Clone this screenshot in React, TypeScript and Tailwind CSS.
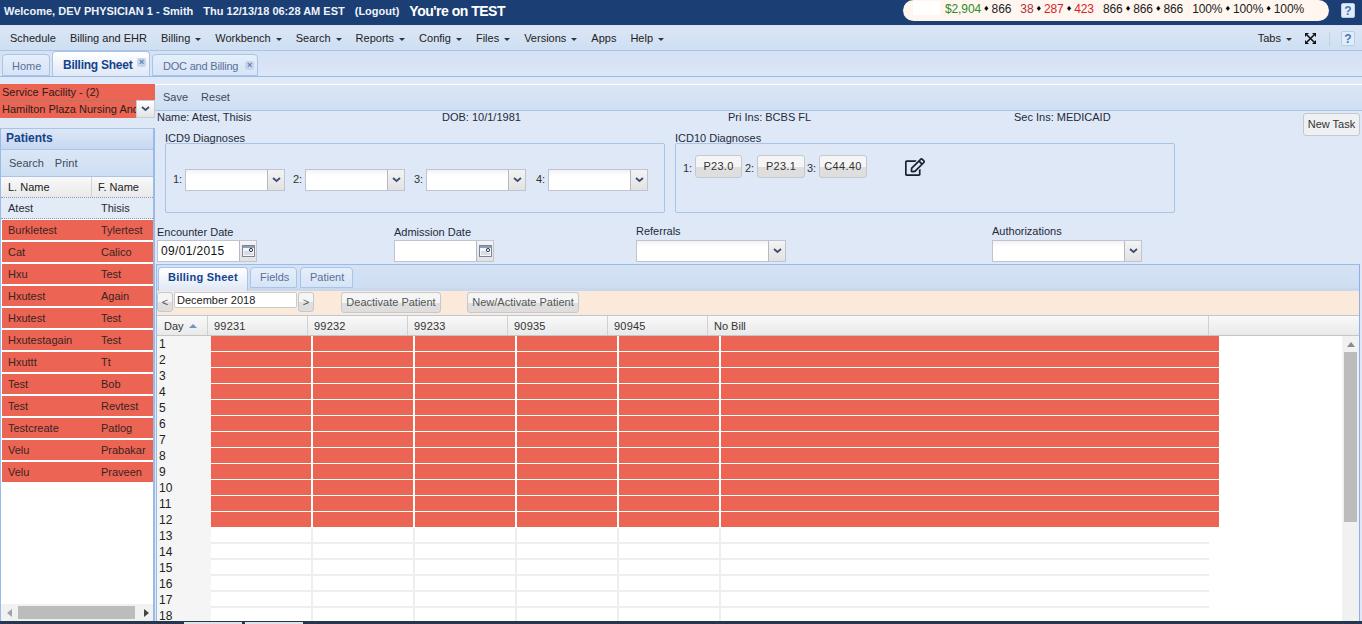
import React from 'react'
import { FaRegEdit } from 'react-icons/fa'

const menuItems = [
  { label: 'Schedule' },
  { label: 'Billing and EHR' },
  { label: 'Billing', caret: true },
  { label: 'Workbench', caret: true },
  { label: 'Search', caret: true },
  { label: 'Reports', caret: true },
  { label: 'Config', caret: true },
  { label: 'Files', caret: true },
  { label: 'Versions', caret: true },
  { label: 'Apps' },
  { label: 'Help', caret: true },
]

const patients = [
  ['Burkletest', 'Tylertest'],
  ['Cat', 'Calico'],
  ['Hxu', 'Test'],
  ['Hxutest', 'Again'],
  ['Hxutest', 'Test'],
  ['Hxutestagain', 'Test'],
  ['Hxuttt', 'Tt'],
  ['Test', 'Bob'],
  ['Test', 'Revtest'],
  ['Testcreate', 'Patlog'],
  ['Velu', 'Prabakar'],
  ['Velu', 'Praveen'],
]

const gridColumns = ['99231', '99232', '99233', '90935', '90945']
const days = Array.from({ length: 18 }, (_, i) => i + 1)

const Caret = () => (
  <span className="ml-[5px] inline-block h-0 w-0 border-x-[3px] border-t-[3px] border-x-transparent border-t-[#333] align-middle" />
)

const Chevron = () => (
  <svg width="9" height="6" viewBox="0 0 9 6">
    <path d="M1 1l3.5 3L8 1" fill="none" stroke="#3a4f75" strokeWidth="1.8" />
  </svg>
)

const Diamond = () => <span className="mx-[3px] text-[9px] text-black">♦</span>

const HelpIcon = () => (
  <span className="flex h-[15px] w-[14px] items-center justify-center rounded-[2px] border border-[#b8cde6] bg-[#e2edfa] text-[12px] font-bold leading-none text-[#3f78b8]">
    ?
  </span>
)

const CalendarIcon = () => (
  <svg width="13" height="12" viewBox="0 0 13 12">
    <rect x="0.5" y="0.5" width="12" height="11" fill="#f4f6fa" stroke="#7b8596" />
    <rect x="1" y="1" width="11" height="2" fill="#8aa0c0" />
    <circle cx="9" cy="5" r="1.6" fill="#fff" stroke="#333" />
    <path d="M2 7h6M2 9h9" stroke="#b9c3d2" />
  </svg>
)

const Trigger = ({ children }: { children: React.ReactNode }) => (
  <div className="flex w-[17px] shrink-0 items-center justify-center border-l border-[#b5b8c8] bg-gradient-to-b from-[#f4f4f4] to-[#e2e2e2]">
    {children}
  </div>
)

const Combo = ({ width, className = '' }: { width: string; className?: string }) => (
  <div className={`flex h-[22px] border border-[#c0c3d0] bg-gradient-to-b from-[#f2f2f2] to-white to-30% ${width} ${className}`}>
    <div className="flex-1" />
    <Trigger>
      <Chevron />
    </Trigger>
  </div>
)

const DateField = ({ value }: { value?: string }) => (
  <div className="flex h-[22px] w-[100px] border border-[#c0c3d0] bg-white">
    <div className="flex-1 pl-[3px] text-[12px] leading-[21px] tracking-[0.35px] text-[#111]">{value}</div>
    <Trigger>
      <CalendarIcon />
    </Trigger>
  </div>
)

const GrayButton = ({ children, className = '' }: { children: React.ReactNode; className?: string }) => (
  <button className={`rounded-[3px] border border-[#c4c8cf] bg-[linear-gradient(#f5f5f5_50%,#dedede_50%)] text-center text-[#555] ${className}`}>
    {children}
  </button>
)

const Tab = ({
  label,
  active,
  closable,
  className = '',
}: {
  label: string
  active?: boolean
  closable?: boolean
  className?: string
}) => (
  <div
    className={`relative rounded-t-[4px] border border-[#a9c4e6] ${
      active
        ? 'border-b-0 bg-gradient-to-b from-white to-[#dfe8f6] font-bold text-[#15428b]'
        : 'bg-gradient-to-b from-[#e6effa] to-[#d6e4f7] text-[#5a7099]'
    } ${className}`}
  >
    {label}
    {closable && (
      <span className="absolute right-[3px] top-[6px] flex h-[9px] w-[9px] items-center justify-center rounded-[2px] bg-[#c6d6ec] text-[9px] font-bold leading-none text-[#5c7db0]">
        ×
      </span>
    )}
  </div>
)

const App: React.FC = () => {
  return (
    <div className="relative flex h-[624px] w-[1362px] flex-col overflow-hidden bg-[#dfe8f6] font-['Liberation_Sans',Arial,sans-serif] text-[11px] text-[#1e2a3a]">
      {/* Top banner */}
      <div className="flex h-[25px] shrink-0 items-start bg-[#1b3f74] pl-[4px] text-white">
        <span className="mt-[3px] text-[11px] font-bold text-[#eef3fa]">Welcome, DEV PHYSICIAN 1 - Smith</span>
        <span className="ml-[10px] mt-[3px] text-[11px] font-bold text-[#eef3fa]">Thu 12/13/18 06:28 AM EST</span>
        <span className="ml-[10px] mt-[3px] text-[11px] font-bold text-[#eef3fa]">(Logout)</span>
        <span className="ml-[10px] mt-[1px] text-[14px] font-bold tracking-[-0.5px]">You're on TEST</span>
        <div className="ml-[398px] flex h-[21px] w-[426px] items-start rounded-full bg-[#fff6f0] pl-[10px] text-[12px] tracking-[-0.1px] text-[#222]">
          <div className="mt-[1px] mr-[5px] h-[14px] w-[27px] bg-white" />
          <div className="flex items-center">
            <span className="text-[#2e8b2e]">$2,904</span>
            <Diamond />
            <span>866</span>
            <span className="ml-[9px] text-[#b03040]">38</span>
            <Diamond />
            <span className="text-[#d8232a]">287</span>
            <Diamond />
            <span className="text-[#d8232a]">423</span>
            <span className="ml-[9px]">866</span>
            <Diamond />
            <span>866</span>
            <Diamond />
            <span>866</span>
            <span className="ml-[9px]">100%</span>
            <Diamond />
            <span>100%</span>
            <Diamond />
            <span>100%</span>
          </div>
        </div>
        <div className="ml-auto mr-[7px] mt-[3px]">
          <HelpIcon />
        </div>
      </div>

      {/* Main menu */}
      <div className="flex h-[26px] shrink-0 items-center border-y border-[#a9c4e6] border-t-[#d6e2f3] bg-gradient-to-b from-[#dbe6f5] to-[#cedff3] pl-[10px] pr-[7px] pt-[1px] text-[#222]">
        <div className="flex gap-[14px]">
          {menuItems.map((item) => (
            <span key={item.label} className="whitespace-nowrap">
              {item.label}
              {item.caret && <Caret />}
            </span>
          ))}
        </div>
        <div className="ml-auto flex items-center">
          <span>
            Tabs
            <Caret />
          </span>
          <svg className="ml-[13px]" width="11" height="11" viewBox="0 0 11 11">
            <path d="M0 0h4L0 4zM11 0v4L7 0zM0 11V7l4 4zM11 11H7l4-4z" fill="#111" />
            <path d="M2 2l7 7M9 2L2 9" stroke="#111" strokeWidth="1.6" />
          </svg>
          <div className="ml-[13px] mr-[11px] h-[14px] w-px bg-[#bcd0e8]" />
          <HelpIcon />
        </div>
      </div>

      {/* Page tabs */}
      <div className="flex h-[26px] shrink-0 items-end gap-[2px] border-b border-[#99bbe8] bg-gradient-to-b from-[#d5e2f4] to-[#dbe6f7] pl-[2px] leading-[22px]">
        <Tab label="Home" className="h-[22px] w-[48px] pl-[9px]" />
        <Tab label="Billing Sheet" active closable className="h-[25px] w-[98px] pl-[10px] text-[12px] leading-[26px] tracking-[-0.25px]" />
        <Tab label="DOC and Billing" closable className="h-[22px] w-[106px] pl-[10px] tracking-[-0.2px]" />
      </div>

      <div className="flex min-h-0 flex-1 flex-col">
        <div className="h-[7px] shrink-0 bg-[#dfe8f6]" />

        <div className="flex min-h-0 flex-1">
          {/* Left column */}
          <div className="flex w-[155px] shrink-0 flex-col">
            <div className="h-[16px] bg-[#ec6554] pl-[2px] leading-[16px] text-[#2a1d1a]">Service Facility - (2)</div>
            <div className="flex h-[18px]">
              <div className="flex-1 overflow-hidden whitespace-nowrap border-t border-[#b0796f] bg-[#ec6554] pl-[2px] leading-[16px] text-[#2a1d1a]">
                Hamilton Plaza Nursing And Rehab
              </div>
              <div className="flex w-[19px] shrink-0 items-center justify-center border border-[#c9ccd4] bg-gradient-to-b from-white to-[#e4e4e4]">
                <Chevron />
              </div>
            </div>
            <div className="mt-[10px] flex min-h-0 flex-1 flex-col border-x border-[#99bbe8] border-r-[2px]">
              <div className="h-[22px] shrink-0 border-y border-[#a9c4e6] bg-gradient-to-b from-[#dde8f6] to-[#c6d8ef] pl-[5px] text-[12px] font-bold leading-[19px] text-[#15428b]">
                Patients
              </div>
              <div className="flex h-[27px] shrink-0 items-center gap-[11px] border-b border-[#a9c4e6] bg-gradient-to-b from-[#dbe6f5] to-[#cedff3] pl-[8px] text-[#3e4a5b]">
                <span>Search</span>
                <span>Print</span>
              </div>
              <div className="flex h-[20px] shrink-0 bg-gradient-to-b from-[#f9f9f9] to-[#e9e9e9] leading-[20px] text-[#222]">
                <div className="w-[91px] border-r border-[#d3d3d3] pl-[7px]">L. Name</div>
                <div className="flex-1 pl-[6px]">F. Name</div>
              </div>
              <div className="flex h-[22px] shrink-0 border-y border-dotted border-[#8a9ab0] bg-[#e3ebf7] leading-[20px]">
                <div className="w-[100px] pl-[7px]">Atest</div>
                <div>Thisis</div>
              </div>
              <div className="min-h-0 flex-1 bg-white pl-[1px] pt-[1px]">
                {patients.map(([last, first], i) => (
                  <div key={i} className="mb-[2px] flex h-[20px] bg-[#ec6554] leading-[20px] text-[#3b2320]">
                    <div className="w-[99px] pl-[6px]">{last}</div>
                    <div>{first}</div>
                  </div>
                ))}
              </div>
              <div className="flex h-[17px] shrink-0 items-center bg-[#f1f1f1]">
                <span className="ml-[6px] h-0 w-0 border-y-[4px] border-r-[5px] border-y-transparent border-r-[#a3a3a3]" />
                <div className="ml-[6px] h-[13px] w-[117px] bg-[#bcbcbc]" />
                <span className="ml-[9px] h-0 w-0 border-y-[4px] border-l-[5px] border-y-transparent border-l-[#444]" />
              </div>
            </div>
          </div>

          {/* Right column */}
          <div className="flex min-w-0 flex-1 flex-col">
            <div className="flex h-[27px] shrink-0 items-center gap-[13px] border-y border-[#a9c4e6] border-t-white bg-gradient-to-b from-[#dbe6f5] to-[#cedff3] pl-[8px] text-[#3e4a5b]">
              <span>Save</span>
              <span>Reset</span>
            </div>

            <div className="flex h-[14px] shrink-0 pl-[2px] leading-[12px]">
              <div className="w-[285px]">Name: Atest, Thisis</div>
              <div className="w-[286px]">DOB: 10/1/1981</div>
              <div className="w-[286px]">Pri Ins: BCBS FL</div>
              <div>Sec Ins: MEDICAID</div>
            </div>

            {/* Diagnoses */}
            <div className="mt-[7px] flex h-[81px] shrink-0 gap-[10px] pl-[10px]">
              <div className="w-[500px]">
                <div className="h-[11px] leading-[13px]">ICD9 Diagnoses</div>
                <div className="flex h-[70px] items-center rounded-[2px] border border-[#a9c4e6] pl-[7px] pt-[3px]">
                  <span className="w-[12px] text-[#333]">1:</span>
                  <Combo width="w-[100px]" />
                  <span className="ml-[8px] w-[12px] text-[#333]">2:</span>
                  <Combo width="w-[100px]" />
                  <span className="ml-[9px] w-[12px] text-[#333]">3:</span>
                  <Combo width="w-[100px]" />
                  <span className="ml-[10px] w-[12px] text-[#333]">4:</span>
                  <Combo width="w-[100px]" />
                </div>
              </div>
              <div className="w-[500px]">
                <div className="h-[11px] leading-[13px]">ICD10 Diagnoses</div>
                <div className="flex h-[70px] items-start rounded-[2px] border border-[#a9c4e6] pl-[7px] pt-[11px]">
                  <span className="mt-[5px] w-[12px] text-[#333]">1:</span>
                  <GrayButton className="h-[23px] w-[47px] tracking-[0.3px] text-[#333]!">P23.0</GrayButton>
                  <span className="ml-[3px] mt-[5px] w-[12px] text-[#333]">2:</span>
                  <GrayButton className="h-[23px] w-[48px] tracking-[0.3px] text-[#333]!">P23.1</GrayButton>
                  <span className="ml-[2px] mt-[5px] w-[12px] text-[#333]">3:</span>
                  <GrayButton className="h-[23px] w-[48px] tracking-[0.3px] text-[#333]!">C44.40</GrayButton>
                  <FaRegEdit className="ml-[38px] mt-[2px] text-[#16202c]" size={20} />
                </div>
              </div>
            </div>

            {/* Dates and lookups */}
            <div className="mt-[11px] flex h-[38px] shrink-0 pl-[2px]">
              <div className="w-[237px]">
                <div className="h-[16px] leading-[16px]">Encounter Date</div>
                <DateField value="09/01/2015" />
              </div>
              <div className="w-[242px]">
                <div className="h-[16px] leading-[16px]">Admission Date</div>
                <DateField />
              </div>
              <div className="w-[356px]">
                <div className="h-[16px] leading-[14px]">Referrals</div>
                <Combo width="w-[150px]" />
              </div>
              <div>
                <div className="h-[16px] leading-[14px]">Authorizations</div>
                <Combo width="w-[150px]" />
              </div>
            </div>

            {/* Billing panel */}
            <div className="ml-px mr-[2px] mt-[2px] flex min-h-0 flex-1 flex-col border-x border-t border-[#99bbe8] border-r-[#8fb0e6]">
              <div className="flex h-[26px] shrink-0 items-end border-b-[3px] border-[#c7d8ef] bg-gradient-to-b from-[#d5e2f4] to-[#cedef3] pl-[1px] leading-[18px]">
                <Tab label="Billing Sheet" active className="z-10 -mb-[3px] h-[24px] w-[90px] pl-[9px] text-[11px] leading-[18px] tracking-[0.25px]" />
                <Tab label="Fields" className="ml-[2px] h-[21px] w-[47px] pl-[9px]" />
                <Tab label="Patient" className="ml-[3px] h-[21px] w-[53px] pl-[9px]" />
              </div>
              <div className="flex h-[25px] shrink-0 items-start border-b border-[#bcc6d4] bg-[#fbe9da] pt-[1px]">
                <GrayButton className="h-[20px] w-[16px]">&lt;</GrayButton>
                <div className="z-10 ml-px h-[16px] w-[123px] rounded-[2px] border border-[#c8ccd2] bg-white pl-[2px] leading-[15px] text-[#222]">
                  December 2018
                </div>
                <GrayButton className="ml-[1px] h-[20px] w-[16px]">&gt;</GrayButton>
                <GrayButton className="ml-[27px] h-[21px] w-[100px]">Deactivate Patient</GrayButton>
                <GrayButton className="ml-[26px] h-[21px] w-[112px]">New/Activate Patient</GrayButton>
              </div>

              {/* Grid */}
              <div className="flex h-[20px] shrink-0 border-b border-[#c5c5c5] bg-gradient-to-b from-[#f9f9f9] to-[#e9e9e9] leading-[20px] text-[#333]">
                <div className="flex w-[51px] items-center border-r border-[#d0d0d0] pl-[7px]">
                  Day
                  <span className="ml-[5px] h-0 w-0 border-x-[4px] border-b-[4px] border-x-transparent border-b-[#6f93c4]" />
                </div>
                {gridColumns.map((code) => (
                  <div key={code} className="w-[100px] border-r border-[#d0d0d0] pl-[6px] tracking-[0.2px]">
                    {code}
                  </div>
                ))}
                <div className="w-[501px] border-r border-[#d0d0d0] pl-[6px]">No Bill</div>
              </div>

              <div className="flex min-h-0 flex-1 bg-white">
                <div className="min-w-0 flex-1 overflow-hidden">
                  {days.map((day) => {
                    const billed = day <= 12
                    return (
                      <div key={day} className="flex h-[16px]">
                        <div className="w-[54px] shrink-0 bg-[#f5f5f5] pl-[2px] text-[12px] leading-[16px] text-[#222]">{day}</div>
                        {gridColumns.map((code) =>
                          billed ? (
                            <div key={code} className="mr-[2px] h-[15px] w-[100px] shrink-0 bg-[#ec6554]" />
                          ) : (
                            <div key={code} className="h-[16px] w-[102px] shrink-0 border-b-2 border-r-2 border-[#eeeeee]" />
                          ),
                        )}
                        <div
                          className={`shrink-0 ${billed ? 'h-[15px] w-[498px] bg-[#ec6554]' : 'h-[16px] w-[488px] border-b-2 border-[#eeeeee]'}`}
                        />
                      </div>
                    )
                  })}
                </div>
                <div className="flex w-[17px] shrink-0 flex-col items-center bg-[#f1f1f1] pt-[6px]">
                  <span className="h-0 w-0 border-x-[4px] border-b-[5px] border-x-transparent border-b-[#8a8a8a]" />
                  <div className="mt-[5px] h-[170px] w-[13px] bg-[#bcbcbc]" />
                </div>
              </div>
            </div>
          </div>
        </div>

        {/* Window strip along the bottom */}
        <div className="flex h-[3px] shrink-0 items-end bg-[#26374d] pl-[184px]">
          <div className="h-[2px] w-[58px] bg-[#dfe3e8]" />
          <div className="ml-[3px] h-[2px] w-[58px] bg-[#dfe3e8]" />
        </div>
      </div>

      <GrayButton className="absolute left-[1303px] top-[113px] h-[23px] w-[57px] bg-none! bg-[#eef0f2]! text-[#333]!">New Task</GrayButton>
    </div>
  )
}

export default App
